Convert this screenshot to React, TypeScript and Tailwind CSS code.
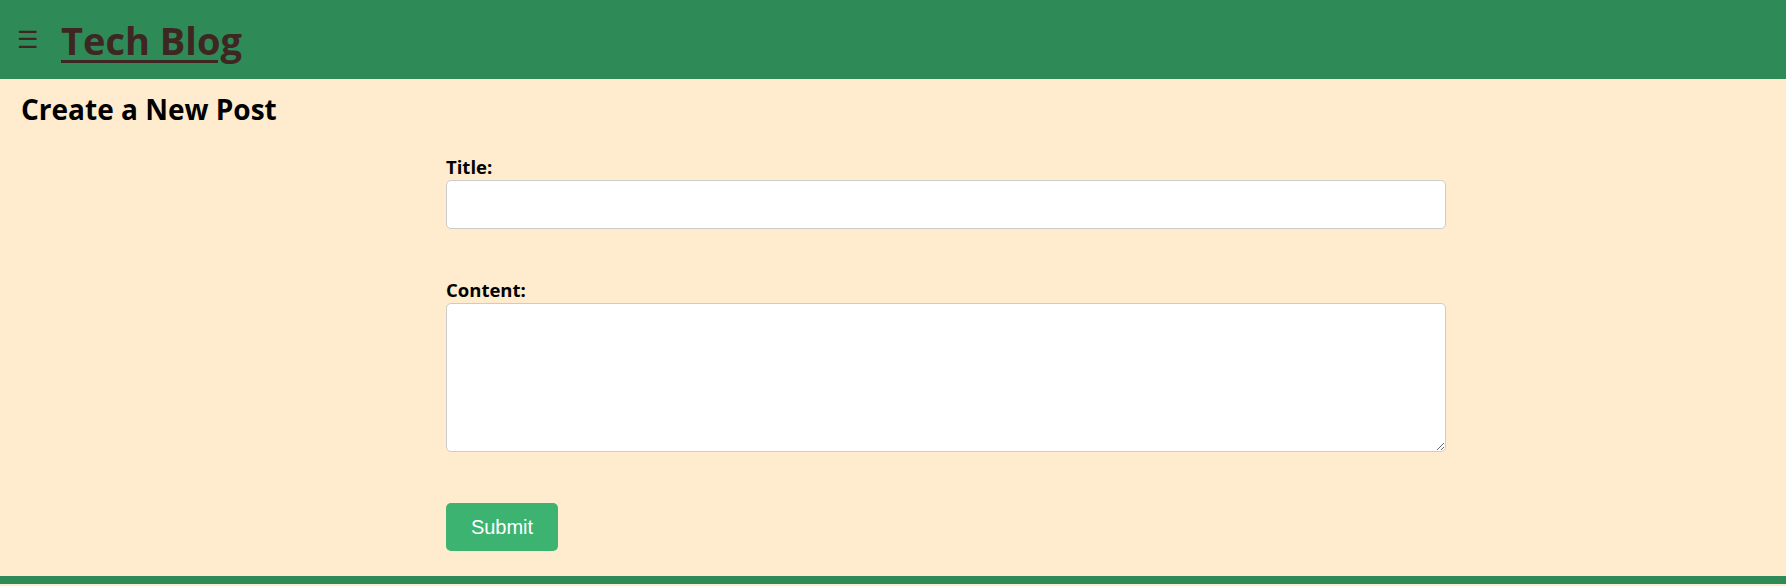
import { useState } from 'react';

const sans = "font-['Open_Sans','Noto_Sans',sans-serif]";

export default function App() {
  const [title, setTitle] = useState('');
  const [content, setContent] = useState('');

  return (
    <div className={`min-h-screen bg-[#ffebcd] ${sans}`}>
      {/* ── Header ── */}
      <header className="h-[79px] bg-[#2e8b57] flex items-center pl-[17px] gap-[22px] text-[#3e2723]">
        <button className="text-[24px] leading-none pb-[2px]">☰</button>
        <a href="#" className="text-[38px] font-bold underline decoration-[3px] underline-offset-[5px] leading-none">
          Tech Blog
        </a>
      </header>

      <main className="px-[21px] pt-[12px] pb-[25px]">
        <h2 className="text-[28px] font-bold leading-[36px] text-black">Create a New Post</h2>

        <form className="ml-[425px] w-[1000px] mt-[29px] flex flex-col" onSubmit={(e) => e.preventDefault()}>
          <label className="block text-[18.5px] font-bold leading-[22px] text-black">Title:</label>
          <input
            value={title}
            onChange={(e) => setTitle(e.target.value)}
            className="mt-[2px] h-[49px] w-full bg-white border border-[#ccc] rounded-[5px] px-3 outline-none"
          />

          <label className="block mt-[50px] text-[18.5px] font-bold leading-[22px] text-black">Content:</label>
          <textarea
            value={content}
            onChange={(e) => setContent(e.target.value)}
            className="mt-[2px] h-[149px] w-full bg-white border border-[#ccc] rounded-[5px] px-3 py-2 outline-none"
          />

          <div className="mt-[51px] flex">
            <button
              type="submit"
              className="h-[48px] w-[112px] rounded-[5px] bg-[#3cb371] text-white text-[20px] font-['Liberation_Sans',Arial,sans-serif]"
            >
              Submit
            </button>
          </div>
        </form>
      </main>

      <footer className="h-[8px] bg-[#2e8b57]" />
    </div>
  );
}
